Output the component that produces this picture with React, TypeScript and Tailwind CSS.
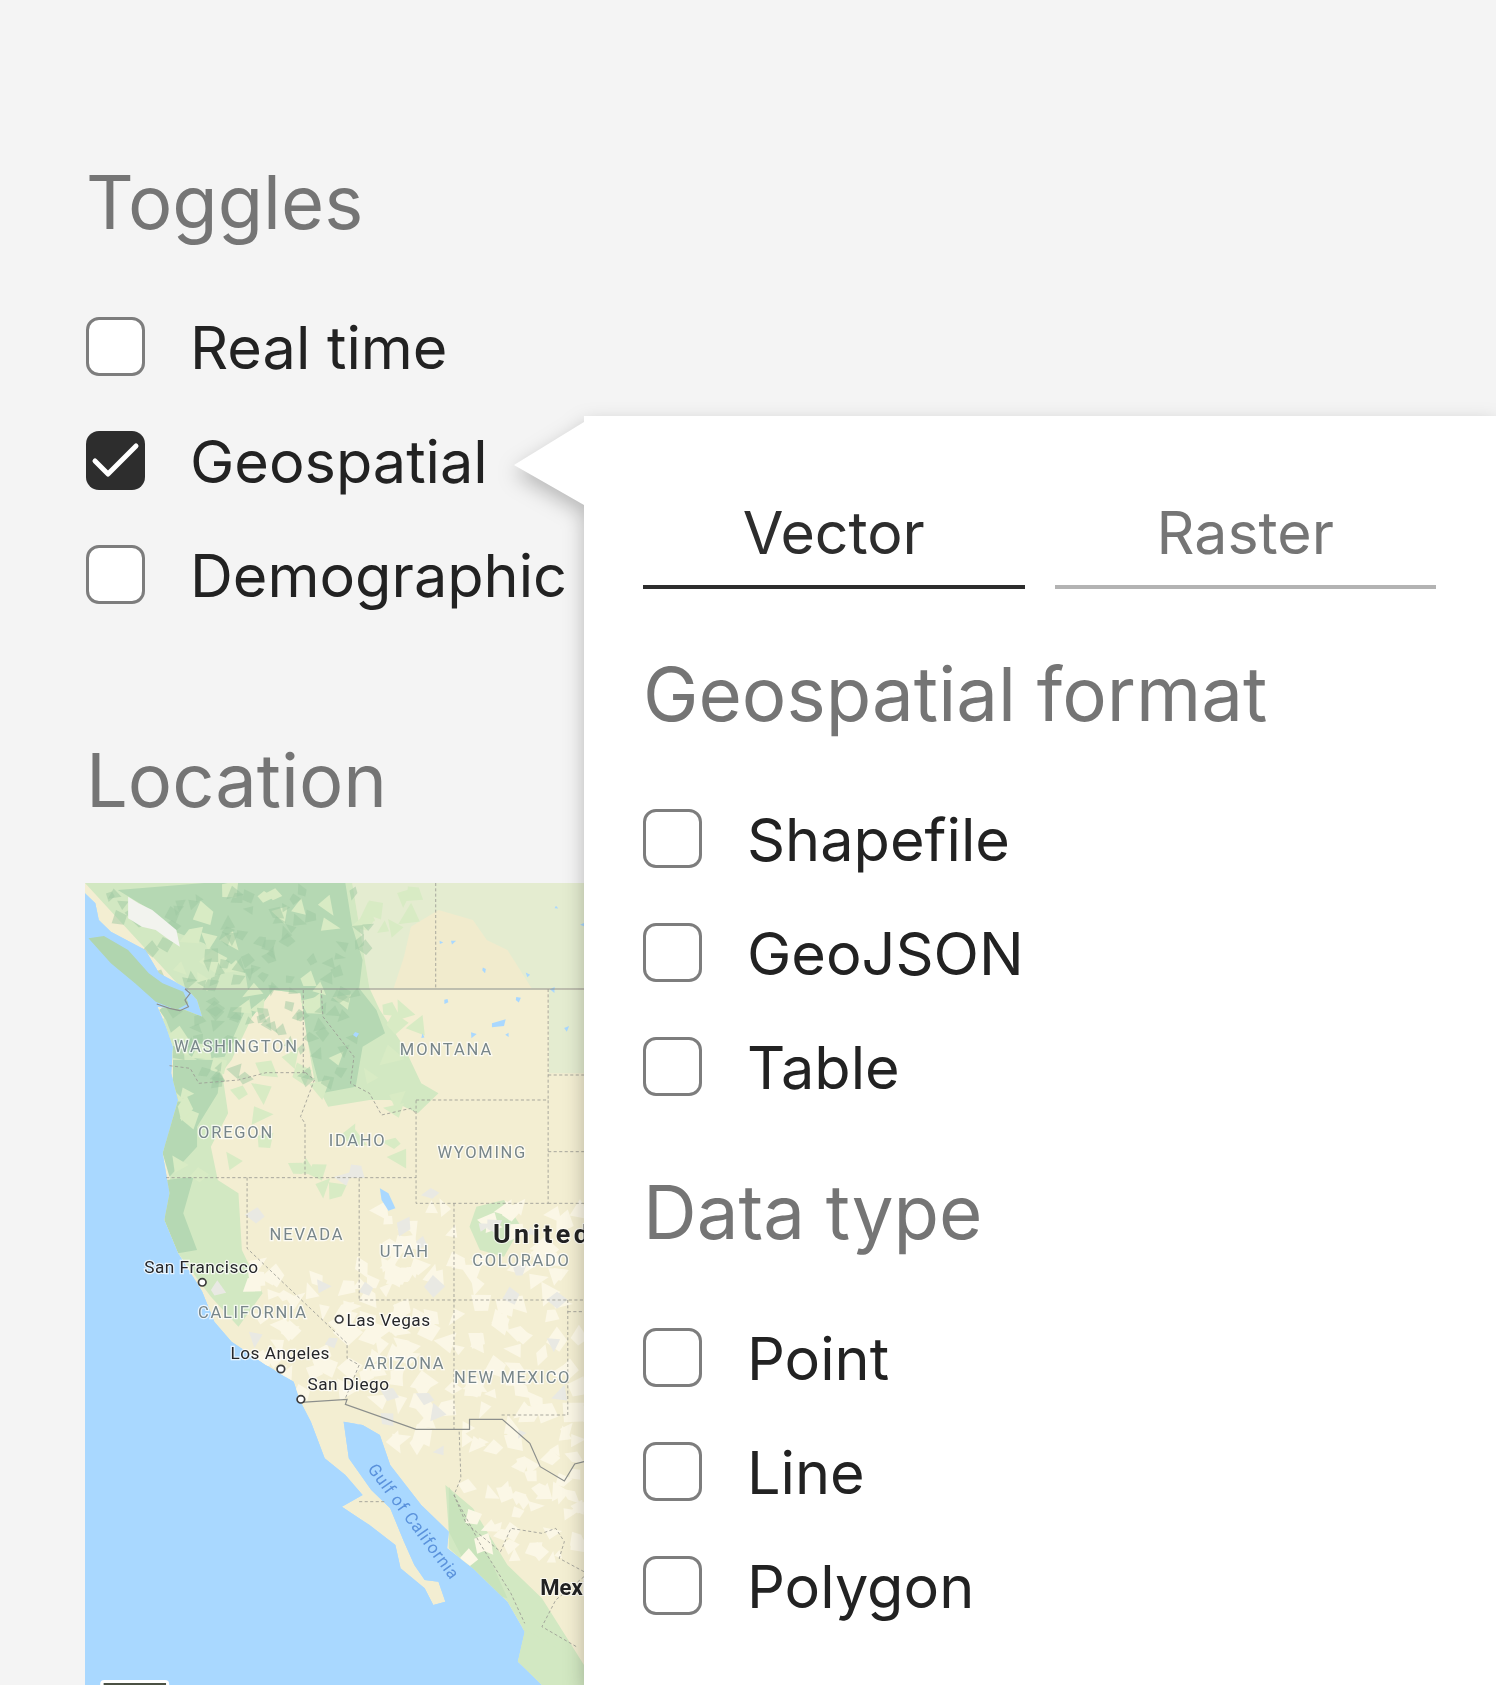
import { useMemo } from "react";

const toggleRows = [
  { label: "Real time", checked: false },
  { label: "Geospatial", checked: true },
  { label: "Demographic", checked: false },
];
const formatRows = ["Shapefile", "GeoJSON", "Table"];
const typeRows = ["Point", "Line", "Polygon"];

// map shapes are in crop units: x 2.904 and y 3 per page px
const LOWER = 1215;
const LAND =
  "75,69 75,100 105,130 115,180 150,215 250,270 290,340 370,385 400,420 415,470 365,450 285,440 310,500 330,560 325,640 345,720 300,880 320,1000 305,1080 345,1180 400,1270 415,1295 450,1385 500,1445 600,1515 680,1565 700,1625 730,1685 770,1795 830,1845 880,1905 820,1940 870,1975 900,1995 975,2055 990,2125 1060,2185 1085,2235 1120,2225 1100,2165 1060,2160 1030,2115 1000,2045 960,1945 905,1890 840,1795 825,1685 880,1695 930,1725 960,1815 1050,1935 1130,2015 1125,2065 1200,2125 1300,2225 1350,2315 1330,2405 1400,2475 1522,2475 1522,69";
const ISLAND = "85,235 130,228 200,270 260,340 300,370 360,395 375,430 340,450 280,425 220,370 150,310";

const LIGHT = [
  "75,69 850,69 900,385 930,450 1000,560 1050,670 1100,700 1040,760 960,720 900,720 780,740 740,660 720,540 700,400 620,390 560,470 500,600 470,640 400,640 330,600 300,480 360,390",
  "330,640 470,620 490,760 440,860 460,960 520,1000 530,1170 590,1300 520,1400 440,1310 345,1180 305,1080 320,1000",
  "1120,1875 1200,1945 1300,2115 1400,2215 1522,2415 1522,2475 1400,2475 1330,2405 1350,2315 1300,2225 1130,2065 1130,2015",
  "1210,1040 1290,1020 1340,1100 1290,1190 1220,1170 1190,1100",
  "1340,2300 1500,2400 1480,2475 1400,2475 1330,2405",
];
const DARK = [
  "420,69 830,69 850,200 880,300 870,385 920,450 945,520 880,560 860,680 760,700 740,620 720,540 700,400 620,390 560,470 540,340 480,300 420,250 300,200 250,140 170,90",
  "370,390 560,390 540,450 480,590 400,600 340,560 310,480 290,450",
  "330,600 470,600 460,700 400,800 400,860 320,950 300,880 330,720",
  "310,960 390,950 360,1060 400,1170 345,1180 305,1080",
  ISLAND,
];
const SIERRA = "1130,1880 1240,2075 1300,2215 1220,2195 1130,2015";
const CANADA = "850,69 1522,69 1522,385 900,385";
const CANADA_TAN = "970,385 1000,290 1020,200 1100,150 1200,180 1240,240 1300,270 1370,385";
const PLAINS = "1420,390 1522,390 1522,640 1420,640";

const SOLID_LINES = [
  "365,387 1522,387",
  "365,387 380,400 365,420 375,440 350,452 320,445 283,432",
  "701,1627 835,1618 830,1633 1035,1708 1190,1708 1190,1678 1285,1678 1365,1750 1395,1820 1465,1863 1495,1812 1522,1805",
];
const DASHED_LINES = [
  "1092,69 1092,387",
  "708,390 708,640",
  "320,617 380,625 405,670 520,660 600,638 715,638",
  "715,638 740,660 700,770 713,790 713,955",
  "310,953 1035,953",
  "760,390 765,470 855,590 845,670 900,700 935,765 1020,745 1035,760",
  "1035,720 1418,720 1418,1030 1035,1030 1035,720",
  "1418,387 1418,720",
  "1418,645 1522,645",
  "1418,875 1522,875",
  "1418,1030 1522,1030",
  "1145,1030 1145,1708",
  "870,955 870,1320",
  "545,953 545,1165 835,1450 835,1495 870,1515 830,1615",
  "870,1320 1522,1320",
  "1475,1320 1475,1665 1280,1665",
  "1475,1355 1522,1355",
  "870,1925 945,1925",
  "1160,1715 1165,1855 1145,1905 1180,1990 1280,2075 1310,2005 1400,2020 1440,2005 1465,2045 1450,2095 1522,2135",
  "1145,1905 1220,2050 1310,2200 1350,2290",
  "1522,2150 1440,2220 1400,2300 1500,2360",
];
const STATE_LABELS = [
  { text: "WASHINGTON", x: 333, y: 577, w: 357 },
  { text: "MONTANA", x: 988, y: 585, w: 265 },
  { text: "OREGON", x: 403, y: 833, w: 215 },
  { text: "IDAHO", x: 782, y: 858, w: 162 },
  { text: "WYOMING", x: 1097, y: 895, w: 255 },
  { text: "NEVADA", x: 610, y: 1140, w: 212 },
  { text: "UTAH", x: 930, y: 1190, w: 140 },
  { text: "COLORADO", x: 1198, y: 1218, w: 280 },
  { text: "CALIFORNIA", x: 403, y: 1375, w: 313 },
  { text: "ARIZONA", x: 885, y: 1527, w: 230 },
  { text: "NEW MEXICO", x: 1145, y: 1568, w: 335 },
];
const CITY_LABELS = [
  { text: "San Francisco", x: 247, y: 1240, w: 330 },
  { text: "Las Vegas", x: 833, y: 1398, w: 243 },
  { text: "Los Angeles", x: 497, y: 1498, w: 287 },
  { text: "San Diego", x: 720, y: 1590, w: 237 },
];
const CITY_DOTS = [
  [415, 1267],
  [812, 1378],
  [643, 1527],
  [701, 1618],
];

// jagged polygons for the terrain texture, seeded so it never moves
function scatter(count: number, seed: number, x0: number, x1: number, y0: number, y1: number, size: number) {
  let s = seed;
  const next = () => {
    s = (s * 16807) % 2147483647;
    return s / 2147483647;
  };
  const out: string[] = [];
  for (let i = 0; i < count; i++) {
    const x = x0 + next() * (x1 - x0);
    const y = y0 + next() * (y1 - y0);
    const sides = next() > 0.5 ? 3 : 4;
    const turn = next() * 6.28;
    const pts: string[] = [];
    for (let k = 0; k < sides; k++) {
      const r = size * (0.5 + next());
      const a = turn + (k * 6.28) / sides;
      pts.push(`${(x + Math.cos(a) * r).toFixed(1)},${(y + Math.sin(a) * r).toFixed(1)}`);
    }
    out.push(pts.join(" "));
  }
  return out;
}

function Checkbox({ label, checked }: { label: string; checked: boolean }) {
  return (
    <div className="flex h-[60px] items-center gap-[45px]">
      {checked ? (
        <div className="h-[59px] w-[59px] rounded-[13px] bg-[#2d2d2d]">
          <svg viewBox="0 0 59 59" className="h-full w-full" fill="none">
            <path d="M9 30 L22 43 L50 15" stroke="#fff" strokeWidth="5" strokeLinecap="round" strokeLinejoin="round" />
          </svg>
        </div>
      ) : (
        <div className="h-[59px] w-[59px] rounded-[13px] border-[3px] border-[#7d7d7d] bg-white" />
      )}
      <span className="pt-[2px] text-[59.4px] leading-[60px] text-[#222222]">{label}</span>
    </div>
  );
}

function MapLabel({ text, x, y, w, city }: { text: string; x: number; y: number; w: number; city?: boolean }) {
  return (
    <text
      x={x}
      y={y}
      textLength={w}
      lengthAdjust="spacing"
      fontFamily="Roboto, sans-serif"
      fontSize={city ? 50 : 48}
      fill={city ? "#26282a" : "#78868a"}
      stroke="#ffffff"
      strokeWidth="7"
      strokeOpacity="0.75"
      paintOrder="stroke"
    >
      {text}
    </text>
  );
}

function TerrainMap() {
  const cream = useMemo(
    () => [
      ...scatter(110, 91, 900, 1522, 1040, 1760, 30),
      ...scatter(60, 37, 560, 1000, 1200, 1620, 30),
      ...scatter(50, 11, 1180, 1522, 1700, 2100, 24),
    ],
    [],
  );
  const grey = useMemo(() => scatter(30, 53, 450, 1500, 700, 1800, 24), []);
  const pale = useMemo(() => scatter(70, 71, 300, 1050, 90, 1000, 30), []);
  const shade = useMemo(() => scatter(130, 23, 150, 900, 90, 680, 20), []);
  const lakes = useMemo(() => scatter(14, 7, 860, 1522, 90, 560, 8), []);

  return (
    <svg viewBox="75 69 1447 2406" preserveAspectRatio="none" className="-ml-px block h-[802px] w-[499px]">
      <defs>
        <clipPath id="land">
          <polygon points={LAND} />
        </clipPath>
        <filter id="soft" x="-2%" y="-2%" width="104%" height="104%">
          <feGaussianBlur stdDeviation="1.8" />
        </filter>
        <filter id="softer" x="-2%" y="-2%" width="104%" height="104%">
          <feGaussianBlur stdDeviation="0.8" />
        </filter>
      </defs>
      <rect x="75" y="69" width="1447" height="2406" fill="#a9d8ff" />
      <g filter="url(#soft)">
        <polygon points={ISLAND} fill="#b0d5af" />
        <g clipPath="url(#land)">
          <polygon points={LAND} fill="#f3eed2" />
          <polygon points={CANADA} fill="#e4ecd0" />
          <polygon points={CANADA_TAN} fill="#f1ebcd" />
          <polygon points={PLAINS} fill="#e4ecd0" />
          {LIGHT.map((p) => (
            <polygon key={p} points={p} fill="#d2e8c2" />
          ))}
          {DARK.map((p) => (
            <polygon key={p} points={p} fill="#b5d8b3" />
          ))}
          <polygon points={SIERRA} fill="#c8e3bb" />
          {pale.map((p) => (
            <polygon key={p} points={p} fill="#d8ebc4" />
          ))}
          {shade.map((p) => (
            <polygon key={p} points={p} fill="#9ec8a2" fillOpacity="0.5" />
          ))}
          {cream.map((p) => (
            <polygon key={p} points={p} fill="#fbf7e6" />
          ))}
          {grey.map((p) => (
            <polygon key={p} points={p} fill="#e9e9e3" />
          ))}
          {lakes.map((p) => (
            <polygon key={p} points={p} fill="#a9d8ff" />
          ))}
          <polygon points="200,110 230,130 270,150 340,210 350,260 320,240 280,210 240,200 200,175" fill="#f2f3ee" />
          <polygon points="930,985 955,1000 975,1045 955,1052 935,1020" fill="#a9d8ff" />
          <polygon points="1255,490 1295,478 1290,498 1255,502" fill="#a9d8ff" />
        </g>
        {SOLID_LINES.map((p) => (
          <polyline key={p} points={p} fill="none" stroke="#8c8f8c" strokeWidth="3.5" />
        ))}
        {DASHED_LINES.map((p) => (
          <polyline key={p} points={p} fill="none" stroke="#9b9b94" strokeWidth="2.5" strokeDasharray="9 7" />
        ))}
      </g>
      <g filter="url(#softer)">
        {STATE_LABELS.map((l) => (
          <MapLabel key={l.text} {...l} />
        ))}
        {CITY_LABELS.map((l) => (
          <MapLabel key={l.text} city {...l} />
        ))}
        {CITY_DOTS.map(([cx, cy]) => (
          <circle key={cx} cx={cx} cy={cy} r="11" fill="#fff" stroke="#3c3c3c" strokeWidth="5" />
        ))}
        <text x="1258" y="1148" fontFamily="Roboto, sans-serif" fontWeight="700" fontSize="78" letterSpacing="10" fill="#222" stroke="#fff" strokeWidth="6" strokeOpacity="0.7" paintOrder="stroke">
          United
        </text>
        <text x="1395" y="2205" fontFamily="Roboto, sans-serif" fontWeight="700" fontSize="64" fill="#222" stroke="#fff" strokeWidth="6" strokeOpacity="0.7" paintOrder="stroke">
          Mexico
        </text>
        <text
          transform={`rotate(54 893 ${LOWER + 612})`}
          x="893"
          y={LOWER + 612}
          textLength="412"
          fontFamily="Roboto, sans-serif"
          fontSize="50"
          fill="#5a92dc"
        >
          Gulf of California
        </text>
      </g>
      <rect x="119" y="2460" width="200" height="40" rx="12" fill="#fff" />
      <rect x="129" y="2469" width="181" height="30" fill="#4b5144" />
    </svg>
  );
}

export default function App() {
  return (
    <div className="relative h-[1685px] w-[1496px] overflow-hidden bg-[#f4f4f4] [font-family:Inter,sans-serif]">
      <div className="pl-[86px] pt-[158px]">
        <h2 className="mb-[70px] text-[74px] leading-[88px] text-[#757575]">Toggles</h2>
        <div className="flex flex-col gap-[54px]">
          {toggleRows.map((r) => (
            <Checkbox key={r.label} label={r.label} checked={r.checked} />
          ))}
        </div>
        <h2 className="mb-[59px] mt-[132px] text-[74px] leading-[88px] text-[#757575]">Location</h2>
        <TerrainMap />
      </div>

      {/* Popover */}
      <div className="absolute bottom-0 left-[514px] right-0 top-[416px] flex drop-shadow-[0_8px_10px_rgba(0,0,0,0.25)]">
        <svg viewBox="0 0 70 83" className="mt-[6px] h-[83px] w-[70px] shrink-0">
          <polygon points="70,0 0,43 70,83" fill="#fff" />
        </svg>
        <div className="flex-1 bg-white pl-[59px] pr-[60px] pt-[81px]">
          <div className="flex gap-[30px]">
            <div className="flex-1 border-b-[4px] border-[#2d2d2d] pb-[16px] text-center text-[59px] leading-[72px] text-[#2d2d2d]">
              Vector
            </div>
            <div className="flex-1 border-b-[4px] border-[#b3b3b3] pb-[16px] text-center text-[59px] leading-[72px] text-[#757575]">
              Raster
            </div>
          </div>
          <h2 className="mb-[70px] mt-[61px] text-[74.4px] leading-[88px] text-[#757575]">Geospatial format</h2>
          <div className="flex flex-col gap-[54px]">
            {formatRows.map((r) => (
              <Checkbox key={r} label={r} checked={false} />
            ))}
          </div>
          <h2 className="mb-[71px] mt-[72px] text-[74.4px] leading-[88px] text-[#757575]">Data type</h2>
          <div className="flex flex-col gap-[54px]">
            {typeRows.map((r) => (
              <Checkbox key={r} label={r} checked={false} />
            ))}
          </div>
        </div>
      </div>
    </div>
  );
}
